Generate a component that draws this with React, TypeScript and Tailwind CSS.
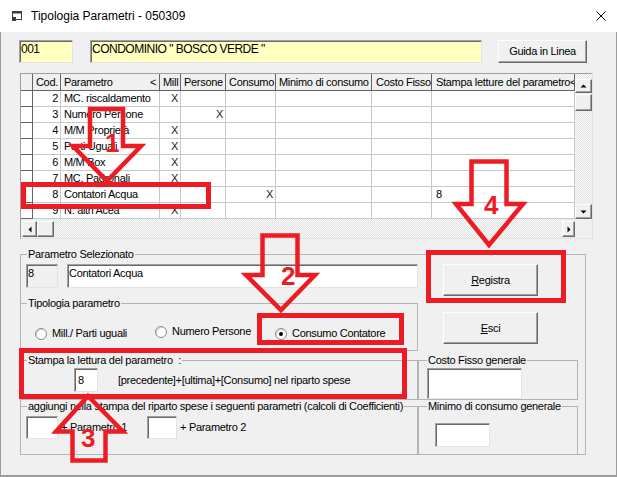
import React from "react";

type Row = {
  cod: number;
  name: string;
  mill?: boolean;
  persone?: boolean;
  consumo?: boolean;
  stampa?: string;
};

const ROWS: Row[] = [
  { cod: 2, name: "MC. riscaldamento", mill: true },
  { cod: 3, name: "Numero Persone", persone: true },
  { cod: 4, name: "M/M Proprietà", mill: true },
  { cod: 5, name: "Parti Uguali", mill: true },
  { cod: 6, name: "M/M Box", mill: true },
  { cod: 7, name: "MC. Padronali", mill: true },
  { cod: 8, name: "Contatori Acqua", consumo: true, stampa: "8" },
  { cod: 9, name: "N. altri Acea", mill: true },
];

// sunken edit box / raised button edges (win classic look)
const sunken =
  "border border-[#a0a0a0] border-b-[#e3e3e3] border-r-[#e3e3e3] shadow-[inset_1px_1px_0_#696969]";
const raised =
  "border border-[#fdfdfd] border-b-[#696969] border-r-[#696969] bg-[#f0f0f0] shadow-[inset_-1px_-1px_0_#a0a0a0]";
const hatch =
  "bg-[image:repeating-conic-gradient(#e2e2e2_0_25%,#fafafa_0_50%)] bg-[length:2px_2px]";
const head =
  "flex h-[17px] shrink-0 items-center overflow-hidden whitespace-nowrap border-b border-r border-[#646464] bg-[#f0f0f0]";
const cell =
  "flex h-[16px] shrink-0 items-center overflow-hidden whitespace-nowrap border-b border-r border-[#c8c8c8] bg-white";

function Tri({ dir }: { dir: "up" | "down" | "left" | "right" }) {
  const d = {
    up: "M0.5 4.5 L3.5 1.5 L6.5 4.5 Z",
    down: "M0.5 1.5 L3.5 4.5 L6.5 1.5 Z",
    left: "M4.5 0.5 L1.5 3.5 L4.5 6.5 Z",
    right: "M1.5 0.5 L4.5 3.5 L1.5 6.5 Z",
  }[dir];
  const w = dir === "up" || dir === "down" ? 7 : 6;
  const h = dir === "up" || dir === "down" ? 6 : 7;
  return (
    <svg width={w} height={h} viewBox={`0 0 ${w} ${h}`}>
      <path d={d} fill="#000" />
    </svg>
  );
}

function Radio({ checked, label, className = "" }: { checked?: boolean; label: string; className?: string }) {
  return (
    <div className={`flex items-center ${className}`}>
      <span className="flex h-[12px] w-[12px] shrink-0 items-center justify-center rounded-full border border-[#8d8d8d] bg-white shadow-[inset_1px_1px_0_#d4d4d4]">
        {checked ? <span className="h-[4px] w-[4px] rounded-full bg-black" /> : null}
      </span>
      <span className="ml-[5px] whitespace-nowrap">{label}</span>
    </div>
  );
}

function Check() {
  return <span className="text-[11px] leading-none text-[#222]">X</span>;
}

function Grid() {
  return (
    <div className="ml-[20px] mt-[10px] flex h-[166px] w-[573px] flex-col border border-[#a0a0a0] border-b-[#e3e3e3] border-r-[#e3e3e3] bg-[#f0f0f0]">
      <div className="flex h-[145px]">
        <div className="h-[145px] w-[554px] overflow-hidden bg-white">
          <div className="flex">
            <div className={`${head} w-[12px]`} />
            <div className={`${head} w-[28px] justify-end pr-[2px]`}>Cod.</div>
            <div className={`${head} w-[99px] justify-between pl-[3px] pr-[3px]`}>
              <span>Parametro</span>
              <span>&lt;</span>
            </div>
            <div className={`${head} w-[21px] pl-[3px]`}>Mill</div>
            <div className={`${head} w-[45px] pl-[3px]`}>Persone</div>
            <div className={`${head} w-[50px] pl-[3px]`}>Consumo</div>
            <div className={`${head} w-[96px] pl-[3px]`}>Minimo di consumo</div>
            <div className={`${head} w-[60px] pl-[4px]`}>Costo Fisso</div>
            <div className={`${head} w-[143px] pl-[4px]`}>Stampa letture del parametro&lt;</div>
          </div>
          {ROWS.map((r) => (
            <div key={r.cod} className="flex">
              <div className="flex h-[16px] w-[12px] shrink-0 border-b border-r border-[#646464] bg-white" />
              <div className={`${cell} w-[28px] justify-end pr-[2px]`}>{r.cod}</div>
              <div className={`${cell} w-[99px] pl-[3px]`}>{r.name}</div>
              <div className={`${cell} w-[21px] justify-end pr-[2px]`}>{r.mill ? <Check /> : null}</div>
              <div className={`${cell} w-[45px] justify-end pr-[2px]`}>{r.persone ? <Check /> : null}</div>
              <div className={`${cell} w-[50px] justify-end pr-[2px]`}>{r.consumo ? <Check /> : null}</div>
              <div className={`${cell} w-[96px]`} />
              <div className={`${cell} w-[60px]`} />
              <div className={`${cell} w-[143px] pl-[4px]`}>{r.stampa ?? ""}</div>
            </div>
          ))}
        </div>
        <div className={`flex w-[17px] flex-col ${hatch}`}>
          <div className={`${raised} mt-[5px] flex h-[14px] items-center justify-center`}>
            <Tri dir="up" />
          </div>
          <div className={`${raised} mt-[1px] h-[17px]`} />
          <div className="flex-1" />
          <div className={`${raised} flex h-[15px] items-center justify-center`}>
            <Tri dir="down" />
          </div>
        </div>
      </div>
      <div className="flex h-[19px]">
        <div className={`flex w-[554px] items-start pl-[1px] pt-[2px] ${hatch}`}>
          <div className={`${raised} flex h-[16px] w-[15px] items-center justify-center`}>
            <Tri dir="left" />
          </div>
          <div className={`${raised} h-[16px] w-[17px]`} />
          <div className="flex-1" />
          <div className={`${raised} flex h-[16px] w-[13px] items-center justify-center`}>
            <Tri dir="right" />
          </div>
        </div>
        <div className="w-[17px] bg-[#f0f0f0]" />
      </div>
    </div>
  );
}

function Annotations() {
  return (
    <svg className="pointer-events-none absolute left-0 top-0" width="617" height="477" viewBox="0 0 617 477">
      <g fill="none" stroke="#ed1c24" strokeWidth="5">
        <rect x="23.5" y="184.5" width="185" height="22" />
        <rect x="259.5" y="315.5" width="142" height="27" />
        <rect x="21.5" y="350.5" width="383" height="46" />
        <rect x="428.5" y="252.5" width="135" height="48" />
      </g>
      <g fill="none" stroke="#ed1c24" strokeWidth="4.5" strokeLinejoin="miter">
        <path d="M90 109 H123 V146 H141 L107 181 L73 146 H90 Z" />
        <path d="M262.5 235.5 H297.5 V275 H315 L281 310 L246 275 H262.5 Z" />
        <path d="M471.5 161.5 H506.5 V204 H523 L489 245 L456 204 H471.5 Z" />
        <path d="M72.5 460.5 H105.5 V431.5 H123 L88 396 L56 431.5 H72.5 Z" />
      </g>
      <g fill="#ed1c24" fontFamily="'Liberation Sans', Arial, sans-serif" fontWeight="bold" fontSize="26" textAnchor="middle">
        <text x="112" y="152">1</text>
        <text x="288" y="285">2</text>
        <text x="88" y="447">3</text>
        <text x="491" y="214">4</text>
      </g>
    </svg>
  );
}

export default function App() {
  return (
    <div className="relative h-[477px] w-[617px] overflow-hidden bg-[#f0f0f0] font-['Liberation_Sans',Arial,sans-serif] text-[11px] leading-[13px] tracking-[-0.3px] text-black shadow-[inset_1px_0_0_#9c9c9c,inset_-1px_0_0_#9c9c9c,inset_0_-2px_0_#9c9c9c]">
      {/* title bar */}
      <div className="flex h-[32px] items-center bg-white pl-[12px] pr-[11px] tracking-normal">
        <svg width="11" height="10" viewBox="0 0 11 10">
          <rect x="0.5" y="0.5" width="9" height="8" fill="#fff" stroke="#3a3a3a" />
          <rect x="0.5" y="0.5" width="9" height="2" fill="#3a3a3a" />
          <rect x="0" y="6" width="4" height="4" fill="#3a3a3a" />
        </svg>
        <span className="ml-[8px] text-[12px] leading-[14px]">Tipologia Parametri - 050309</span>
        <svg className="ml-auto" width="10" height="10" viewBox="0 0 10 10">
          <path d="M0.5 0.5 L9.5 9.5 M9.5 0.5 L0.5 9.5" stroke="#000" strokeWidth="1" />
        </svg>
      </div>

      {/* condominio row */}
      <div className="mt-[8px] flex pl-[19px]">
        <div className={`${sunken} h-[23px] w-[54px] bg-[#ffffc0] pl-[1px] pt-[2px] text-[12px] tracking-[-0.5px]`}>001</div>
        <div className={`${sunken} ml-[17px] h-[23px] w-[392px] bg-[#ffffc0] pl-[1px] pt-[2px] text-[12px] tracking-[-0.5px]`}>
          CONDOMINIO " BOSCO VERDE "
        </div>
        <button type="button" className={`${raised} ml-[16px] h-[23px] w-[89px]`}>
          Guida in Linea
        </button>
      </div>

      <Grid />

      {/* Parametro Selezionato */}
      <fieldset className="ml-[20px] mt-[9px] w-[566px] border border-[#b4b4b4]">
        <legend className="ml-[6px] px-[1px] leading-[13px]">Parametro Selezionato</legend>
        <div className="flex">
          <div className="w-[397px]">
            <div className="mt-[3px] flex">
              <div className={`${sunken} ml-[5px] h-[24px] w-[32px] bg-[#f0f0f0] pl-[1px] pt-[2px]`}>8</div>
              <div className={`${sunken} ml-[9px] h-[24px] w-[351px] bg-white pl-[1px] pt-[2px]`}>Contatori Acqua</div>
            </div>
            <fieldset className="mt-[9px] w-[397px] border border-l-0 border-[#b4b4b4] pb-[11px]">
              <legend className="ml-[6px] px-[1px] leading-[13px]">Tipologia parametro</legend>
              <div className="mt-[15px] flex h-[14px] items-start pl-[14px]">
                <Radio label="Mill./ Parti uguali" className="mt-[2px] w-[120px]" />
                <Radio label="Numero Persone" className="w-[120px]" />
                <Radio label="Consumo Contatore" checked className="mt-[2px]" />
              </div>
            </fieldset>
          </div>
          <div className="flex flex-col pl-[25px]">
            <button type="button" className={`${raised} mt-[3px] h-[32px] w-[95px]`}>
              <span className="underline">R</span>egistra
            </button>
            <button type="button" className={`${raised} mt-[16px] h-[32px] w-[95px]`}>
              <span className="underline">E</span>sci
            </button>
          </div>
        </div>

        <div className="mt-[3px] flex items-stretch">
          <fieldset className="w-[397px] border border-l-0 border-[#b4b4b4] pb-[7px]">
            <legend className="ml-[6px] px-[1px] leading-[13px]">Stampa la lettura del parametro&nbsp; :</legend>
            <div className="mt-[1px] flex items-center">
              <div className={`${sunken} ml-[53px] flex h-[24px] w-[24px] items-center bg-white pl-[3px]`}>8</div>
              <span className="ml-[20px] whitespace-nowrap">[precedente]+[ultima]+[Consumo] nel riparto spese</span>
            </div>
          </fieldset>
          <fieldset className="w-[160px] border border-[#b4b4b4]">
            <legend className="ml-[8px] px-[1px] leading-[13px]">Costo Fisso generale</legend>
            <div className={`${sunken} ml-[8px] mt-[1px] h-[31px] w-[95px] bg-white`} />
          </fieldset>
        </div>

        <div className="flex items-stretch">
          <fieldset className="w-[397px] border border-b-0 border-l-0 border-[#b4b4b4]">
            <legend className="ml-[6px] whitespace-nowrap px-[1px] leading-[13px]">
              aggiungi nella stampa del riparto spese i seguenti parametri (calcoli di Coefficienti)
            </legend>
            <div className="mt-[3px] flex items-center">
              <div className="ml-[5px] flex w-[121px] items-center">
                <div className={`${sunken} h-[23px] w-[32px] bg-white`} />
                <span className="ml-[3px]">+ Parametro 1</span>
              </div>
              <div className={`${sunken} h-[23px] w-[30px] bg-white`} />
              <span className="ml-[3px]">+ Parametro 2</span>
            </div>
          </fieldset>
          <fieldset className="w-[160px] border border-b-0 border-[#b4b4b4] pb-[7px]">
            <legend className="ml-[8px] whitespace-nowrap px-[1px] leading-[13px]">Minimo di consumo generale</legend>
            <div className={`${sunken} ml-[16px] mt-[10px] h-[24px] w-[55px] bg-white`} />
          </fieldset>
        </div>
      </fieldset>

      <Annotations />
    </div>
  );
}
